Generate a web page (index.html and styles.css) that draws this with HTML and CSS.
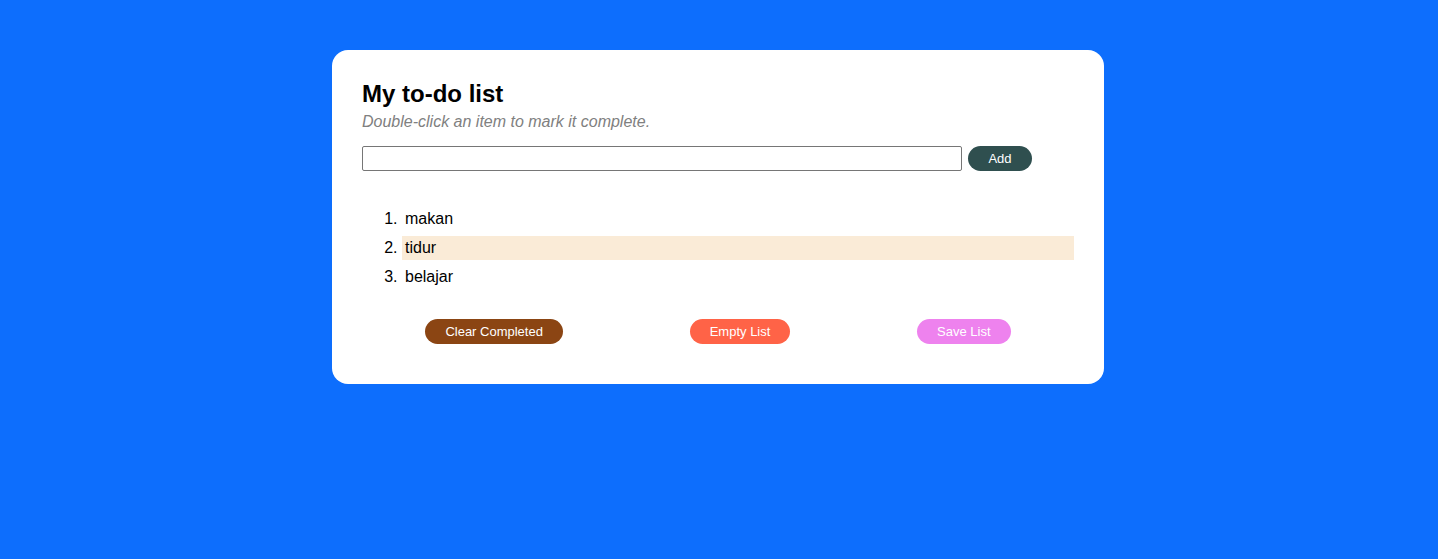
FILE: index.html
```html
<!DOCTYPE html>
<html>
<head>
<meta charset="utf-8">
<title>To-do</title>
<link rel="stylesheet" href="styles.css">
</head>
<body>
<main class="card">
  <h1 class="title">My to-do list</h1>
  <p class="hint">Double-click an item to mark it complete.</p>
  <div class="entry">
    <input class="entry-input" type="text">
    <button class="btn btn-add">Add</button>
  </div>
  <ol class="items">
    <li class="item">makan</li>
    <li class="item item-active">tidur</li>
    <li class="item">belajar</li>
  </ol>
  <div class="actions">
    <button class="btn btn-clear">Clear Completed</button>
    <button class="btn btn-empty">Empty List</button>
    <button class="btn btn-save">Save List</button>
  </div>
</main>
</body>
</html>
```

FILE: styles.css
```css
html, body {
  margin: 0;
  padding: 0;
}
body {
  background: #0d6efd;
  font-family: "Liberation Sans", Arial, sans-serif;
  padding: 50px 2px 0 0;
  min-height: 509px;
}
.card {
  width: 712px;
  margin: 0 auto;
  background: #fff;
  border-radius: 16px;
  padding: 30px 30px 30px;
}
.title {
  margin: 0;
  font-size: 24px;
  font-weight: bold;
  color: #000;
  line-height: 27.6px;
}
.hint {
  margin: 5px 0 0;
  font-size: 16px;
  font-style: italic;
  color: #808080;
  line-height: 18.4px;
}
.entry {
  display: flex;
  gap: 6px;
  margin-top: 15px;
}
.entry-input {
  box-sizing: border-box;
  width: 600px;
  height: 25px;
  border: 1px solid #767676;
  border-radius: 2px;
  margin: 0;
}
.btn {
  height: 25px;
  border: none;
  border-radius: 13px;
  color: #fff;
  font-family: "Liberation Sans", Arial, sans-serif;
  font-size: 13px;
  padding: 0 20px;
  margin: 0;
}
.btn-add {
  background: #2f4f4f;
  width: 64px;
  padding: 0;
}
.items {
  margin: 36px 0 0;
  padding-left: 40px;
  font-size: 16px;
  color: #000;
}
.item {
  padding: 3px 3px;
  line-height: 18px;
  margin-bottom: 5px;
}
.item:last-child {
  margin-bottom: 0;
}
.item-active {
  background: #faebd7;
}
.actions {
  display: flex;
  justify-content: space-around;
  margin: 30px 0 10px;
}
.btn-clear {
  background: #8b4513;
}
.btn-empty {
  background: #ff6347;
}
.btn-save {
  background: #ee82ee;
}
```
